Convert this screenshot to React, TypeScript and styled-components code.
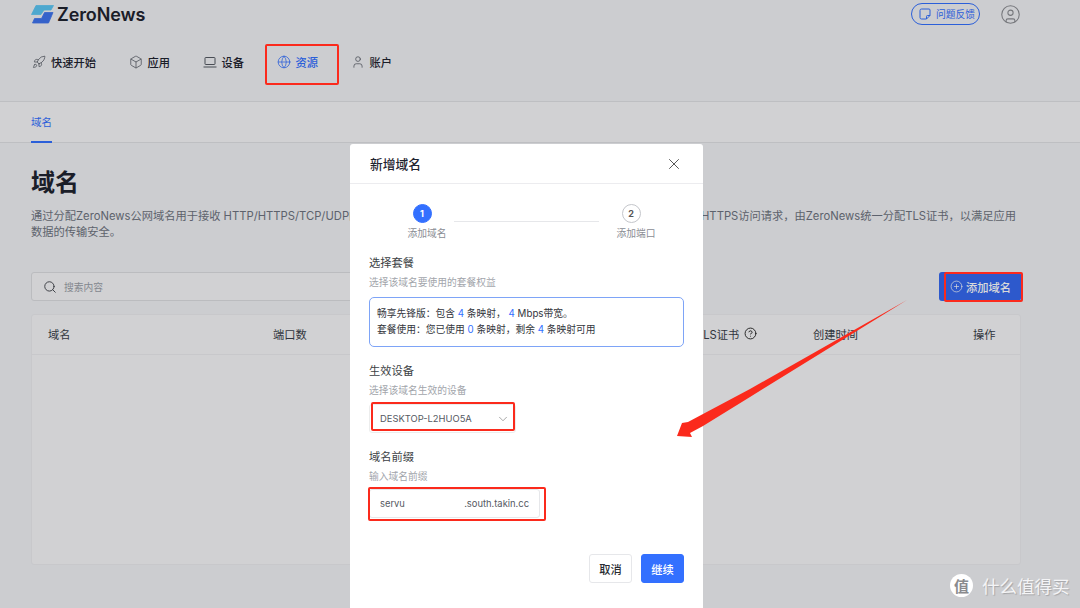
import styled, { createGlobalStyle } from 'styled-components';
import {
	Box,
	ChevronDown,
	CircleHelp,
	CirclePlus,
	CircleUser,
	Globe,
	Rocket,
	Search,
	User,
	X,
} from 'lucide-react';

const Colors = {
	blue: '#3370ff',
	ink: '#1f2430',
	text: '#3a3f4a',
	muted: '#6e7480',
	faint: '#9a9fa8',
	line: '#e4e6ea',
	red: '#fb2a1c',
};

function LaptopIcon({ size = 14 }: { size?: number }) {
	return (
		<svg width={size} height={size} viewBox="0 0 14 14" fill="none" stroke="currentColor" strokeWidth="1">
			<rect x="2" y="2.5" width="10" height="7" rx="0.6" />
			<path d="M0.5 12H13.5" />
		</svg>
	);
}

function NoteIcon() {
	return (
		<svg width="12" height="12" viewBox="0 0 12 12" fill="none" stroke="currentColor" strokeWidth="1">
			<path d="M2.5 1H10A1 1 0 0 1 11 2V7.5L7.5 11H2.5A1.5 1.5 0 0 1 1 9.5V2.5A1.5 1.5 0 0 1 2.5 1Z" />
			<path d="M7.5 11V8.5A1 1 0 0 1 8.5 7.5H11" />
		</svg>
	);
}

const navItems = [
	{ label: '快速开始', icon: Rocket },
	{ label: '应用', icon: Box },
	{ label: '设备', icon: LaptopIcon },
	{ label: '资源', icon: Globe, active: true },
	{ label: '账户', icon: User },
];

function Logo() {
	return (
		<S.Logo>
			<svg width="23" height="19" viewBox="0 0 23 19">
				<path d="M5 0.5H22.5L20 5H13L10 9.5H0.5Z" fill="#5cc6f4" stroke="#5cc6f4" strokeLinejoin="round" strokeWidth="0.8" />
				<path d="M13.5 7.5H22L17.5 18H1.5L3.5 13.5H10.5Z" fill="#3f74ee" stroke="#3f74ee" strokeLinejoin="round" strokeWidth="0.8" />
			</svg>
			<S.LogoText>ZeroNews</S.LogoText>
		</S.Logo>
	);
}

function Stepper() {
	return (
		<S.Stepper>
			<S.Step>
				<S.StepDot $active>1</S.StepDot>
				<S.StepLabel>添加域名</S.StepLabel>
			</S.Step>
			<S.StepLine />
			<S.Step>
				<S.StepDot>2</S.StepDot>
				<S.StepLabel>添加端口</S.StepLabel>
			</S.Step>
		</S.Stepper>
	);
}

function Modal() {
	return (
		<S.Modal>
			<S.ModalHeader>
				<S.ModalTitle>新增域名</S.ModalTitle>
				<X size={18} strokeWidth={1.2} color="#444" />
			</S.ModalHeader>
			<S.ModalBody>
				<Stepper />
				<S.FieldTitle>选择套餐</S.FieldTitle>
				<S.FieldHint>选择该域名要使用的套餐权益</S.FieldHint>
				<S.PlanCard>
					<div>
						畅享先锋版：包含 <S.Num>4</S.Num> 条映射， <S.Num>4</S.Num> Mbps带宽。
					</div>
					<div>
						套餐使用：您已使用 <S.Num>0</S.Num> 条映射，剩余 <S.Num>4</S.Num> 条映射可用
					</div>
				</S.PlanCard>
				<S.FieldTitle $gap={16}>生效设备</S.FieldTitle>
				<S.FieldHint>选择该域名生效的设备</S.FieldHint>
				<S.Select>
					DESKTOP-L2HUO5A
					<ChevronDown size={14} strokeWidth={1.1} color="#777" />
				</S.Select>
				<S.FieldTitle $gap={16}>域名前缀</S.FieldTitle>
				<S.FieldHint>输入域名前缀</S.FieldHint>
				<S.PrefixInput>
					<span>servu</span>
					<span>.south.takin.cc</span>
				</S.PrefixInput>
				<S.ModalFooter>
					<S.CancelButton>取消</S.CancelButton>
					<S.ConfirmButton>继续</S.ConfirmButton>
				</S.ModalFooter>
			</S.ModalBody>
		</S.Modal>
	);
}

export default function App() {
	return (
		<S.Page>
			<S.GlobalStyle />
			<S.Header>
				<S.TopBar>
					<Logo />
					<S.TopActions>
						<S.FeedbackButton>
							<NoteIcon />
							问题反馈
						</S.FeedbackButton>
						<CircleUser size={21} strokeWidth={1.2} color="#8a8c91" />
					</S.TopActions>
				</S.TopBar>
				<S.Nav>
					{navItems.map(({ label, icon: Icon, active }) => (
						<S.NavItem key={label} $active={active}>
							<Icon size={14} strokeWidth={1.3} />
							<span>{label}</span>
						</S.NavItem>
					))}
				</S.Nav>
			</S.Header>
			<S.Tabs>
				<S.Tab>域名</S.Tab>
			</S.Tabs>
			<S.Content>
				<S.Title>域名</S.Title>
				<S.Description>
					通过分配ZeroNews公网域名用于接收 HTTP/HTTPS/TCP/UDP的应用流量，并转发到您设备上的本地服务；对于全部的域名及其端口
					HTTPS访问请求，由ZeroNews统一分配TLS证书，以满足应用
					<br />
					数据的传输安全。
				</S.Description>
				<S.Toolbar>
					<S.SearchBox>
						<Search size={14} strokeWidth={1.6} color="#3f434a" />
						搜索内容
					</S.SearchBox>
					<S.AddButton>
						<CirclePlus size={13} strokeWidth={1.3} />
						添加域名
					</S.AddButton>
				</S.Toolbar>
				<S.Table>
					<S.TableHead>
						<span>域名</span>
						<span>端口数</span>
						<S.HeadWithIcon>
							TLS证书
							<CircleHelp size={13} strokeWidth={1.7} color="#222" />
						</S.HeadWithIcon>
						<span>创建时间</span>
						<span>操作</span>
					</S.TableHead>
				</S.Table>
			</S.Content>
			<S.Backdrop />
			<Modal />
			<S.NavMark />
			<S.SelectMark />
			<S.InputMark />
			<S.AddMark />
			<S.Arrow viewBox="0 0 1080 608">
				<polygon
					points="907,300 750,389 703,414 688,422 682,423 677,436 692,437 690,433 703,426 750,397"
					fill={Colors.red}
				/>
			</S.Arrow>
			<S.Watermark>
				<S.WatermarkBadge>值</S.WatermarkBadge>
				什么值得买
			</S.Watermark>
		</S.Page>
	);
}

namespace S {
	export const GlobalStyle = createGlobalStyle`
		html, body {
			margin: 0;
			padding: 0;
		}
		* {
			box-sizing: border-box;
		}
		body {
			font-family: Inter, 'Noto Sans CJK SC', sans-serif;
			color: ${Colors.text};
		}
	`;

	export const Page = styled.div`
		position: relative;
		width: 1080px;
		height: 608px;
		overflow: hidden;
		background-color: #f0f1f5;
	`;

	export const Header = styled.header`
		height: 102px;
		border-bottom: 1px solid #e0e1e4;
	`;

	export const TopBar = styled.div`
		display: flex;
		align-items: center;
		justify-content: space-between;
		height: 28px;
		padding: 0 59px 0 31px;
	`;

	export const Logo = styled.div`
		display: flex;
		align-items: center;
		gap: 3px;
	`;

	export const LogoText = styled.span`
		font-size: 18px;
		font-weight: 600;
		letter-spacing: -0.1px;
		color: ${Colors.ink};
	`;

	export const TopActions = styled.div`
		display: flex;
		align-items: center;
		gap: 20px;
	`;

	export const FeedbackButton = styled.div`
		display: flex;
		align-items: center;
		gap: 5px;
		width: 69px;
		height: 22px;
		margin-top: -1px;
		padding-left: 7px;
		border: 1px solid ${Colors.blue};
		border-radius: 11px;
		font-size: 9.75px;
		color: ${Colors.blue};
	`;

	export const Nav = styled.nav`
		display: flex;
		align-items: center;
		gap: 32.5px;
		height: 20px;
		margin-top: 24px;
		padding-left: 32px;
	`;

	export const NavItem = styled.div<{ $active?: boolean }>`
		display: flex;
		align-items: center;
		gap: 5px;
		font-size: 11.25px;
		font-weight: 500;
		color: ${({ $active }) => ($active ? Colors.blue : Colors.ink)};

		svg {
			color: ${({ $active }) => ($active ? Colors.blue : '#555a63')};
		}
	`;

	export const Tabs = styled.div`
		display: flex;
		height: 41px;
		padding-left: 31px;
		background-color: #f6f6f8;
		border-bottom: 1px solid #e0e1e4;
	`;

	export const Tab = styled.div`
		display: flex;
		align-items: center;
		height: 41px;
		border-bottom: 2px solid ${Colors.blue};
		font-size: 10.5px;
		color: ${Colors.blue};
	`;

	export const Content = styled.main`
		padding: 25px 59px 0 31px;
	`;

	export const Title = styled.h1`
		margin: 0;
		font-size: 24px;
		line-height: 30px;
		font-weight: 700;
		color: ${Colors.ink};
	`;

	export const Description = styled.p`
		margin: 10px 0 0;
		font-size: 11.25px;
		line-height: 16px;
		white-space: nowrap;
		color: ${Colors.muted};
	`;

	export const Toolbar = styled.div`
		display: flex;
		align-items: center;
		justify-content: space-between;
		height: 29px;
		margin-top: 32px;
	`;

	export const SearchBox = styled.div`
		display: flex;
		align-items: center;
		gap: 7px;
		width: 640px;
		height: 29px;
		padding-left: 11px;
		background-color: #f6f6f8;
		border: 1px solid #dcdde1;
		border-radius: 3px;
		font-size: 9.75px;
		color: ${Colors.faint};
	`;

	export const AddButton = styled.div`
		display: flex;
		align-items: center;
		gap: 3px;
		width: 82px;
		height: 29px;
		padding-left: 11px;
		background-color: #3569f0;
		border-radius: 3px;
		font-size: 11.25px;
		font-weight: 500;
		color: #fff;
	`;

	export const Table = styled.section`
		height: 251px;
		margin-top: 13px;
		background-color: #f6f6f8;
		border: 1px solid #ebecef;
		border-radius: 3px;
	`;

	export const TableHead = styled.div`
		display: grid;
		grid-template-columns: 225px 423px 117px 160px 1fr;
		align-items: center;
		height: 40px;
		padding: 0 0 2px 16px;
		border-bottom: 1px solid #ebecef;
		font-size: 11.25px;
		color: ${Colors.text};
	`;

	export const HeadWithIcon = styled.span`
		display: flex;
		align-items: center;
		gap: 5px;
	`;

	export const Backdrop = styled.div`
		position: absolute;
		inset: 0;
		background-color: rgba(0, 0, 0, 0.15);
	`;

	export const Modal = styled.div`
		position: absolute;
		top: 144px;
		left: 350px;
		width: 353px;
		height: 480px;
		background-color: #fff;
		border-radius: 3px;
	`;

	export const ModalHeader = styled.div`
		display: flex;
		align-items: center;
		justify-content: space-between;
		height: 40px;
		padding: 0 20px;
		border-bottom: 1px solid #ececef;
	`;

	export const ModalTitle = styled.div`
		font-size: 12.75px;
		font-weight: 500;
		color: ${Colors.ink};
	`;

	export const ModalBody = styled.div`
		padding: 20px 19px 0;
	`;

	export const Stepper = styled.div`
		display: flex;
		padding-left: 39px;
		margin-bottom: 14px;
	`;

	export const Step = styled.div`
		display: flex;
		flex-direction: column;
		align-items: center;
		width: 38px;
	`;

	export const StepDot = styled.div<{ $active?: boolean }>`
		display: flex;
		align-items: center;
		justify-content: center;
		width: 19px;
		height: 19px;
		margin-right: 10px;
		border-radius: 50%;
		border: 1px solid ${({ $active }) => ($active ? Colors.blue : '#c4c6cb')};
		background-color: ${({ $active }) => ($active ? Colors.blue : '#fff')};
		font-size: 9px;
		line-height: 11px;
		font-weight: 700;
		color: ${({ $active }) => ($active ? '#fff' : '#555')};
	`;

	export const StepLabel = styled.div`
		margin-top: 3px;
		font-size: 9.75px;
		line-height: 15px;
		white-space: nowrap;
		color: #8a8d94;
	`;

	export const StepLine = styled.div`
		width: 145px;
		height: 1px;
		margin: 17px 18px 0 8px;
		background-color: #e6e7ea;
	`;

	export const FieldTitle = styled.div<{ $gap?: number }>`
		margin-top: ${({ $gap }) => $gap ?? 0}px;
		font-size: 11.25px;
		line-height: 16px;
		color: #3c3f45;
	`;

	export const FieldHint = styled.div`
		margin-top: 5px;
		font-size: 9.75px;
		line-height: 14px;
		color: #a2a5ab;
	`;

	export const PlanCard = styled.div`
		display: flex;
		flex-direction: column;
		justify-content: center;
		height: 50px;
		margin-top: 7px;
		padding-left: 7px;
		border: 1px solid #7ea4f7;
		border-radius: 5px;
		font-size: 9.75px;
		line-height: 16px;
		color: #33363c;
	`;

	export const Num = styled.span`
		color: ${Colors.blue};
	`;

	export const Select = styled.div`
		display: flex;
		align-items: center;
		justify-content: space-between;
		width: 147px;
		height: 29px;
		margin-top: 6px;
		padding: 0 5px 0 10px;
		border: 1px solid #eceded;
		border-radius: 3px;
		font-size: 9.4px;
		color: #555962;
	`;

	export const PrefixInput = styled.div`
		display: flex;
		align-items: center;
		justify-content: space-between;
		width: 171px;
		height: 29px;
		margin-top: 5px;
		padding: 0 10px 0 10px;
		border: 1px solid #e6e7ea;
		border-radius: 3px;
		font-size: 9.4px;
		color: #555962;
	`;

	export const ModalFooter = styled.div`
		display: flex;
		justify-content: flex-end;
		gap: 9px;
		margin-top: 36px;
	`;

	export const CancelButton = styled.div`
		display: flex;
		align-items: center;
		justify-content: center;
		width: 43px;
		height: 29px;
		border: 1px solid #e6e7ea;
		border-radius: 3px;
		font-size: 11.25px;
		font-weight: 500;
		color: #2a2d33;
	`;

	export const ConfirmButton = styled(CancelButton)`
		border-color: ${Colors.blue};
		background-color: ${Colors.blue};
		color: #fff;
	`;

	const Mark = styled.div`
		position: absolute;
		border: 2.5px solid ${Colors.red};
		border-radius: 2px;
	`;

	export const NavMark = styled(Mark)`
		top: 44px;
		left: 265px;
		width: 74px;
		height: 41px;
	`;

	export const SelectMark = styled(Mark)`
		top: 402px;
		left: 371px;
		width: 144px;
		height: 29px;
	`;

	export const InputMark = styled(Mark)`
		top: 487px;
		left: 368px;
		width: 178px;
		height: 34px;
	`;

	export const AddMark = styled(Mark)`
		top: 272px;
		left: 944px;
		width: 79px;
		height: 30px;
	`;

	export const Arrow = styled.svg`
		position: absolute;
		inset: 0;
		width: 1080px;
		height: 608px;
		pointer-events: none;
	`;

	export const Watermark = styled.div`
		position: absolute;
		top: 573px;
		left: 950px;
		display: flex;
		align-items: center;
		gap: 9px;
		height: 24px;
		font-size: 17.5px;
		white-space: nowrap;
		color: #f4f4f6;
		text-shadow: 1px 1px 1px rgba(0, 0, 0, 0.2);
	`;

	export const WatermarkBadge = styled.div`
		display: flex;
		align-items: center;
		justify-content: center;
		width: 23px;
		height: 23px;
		border-radius: 50%;
		background-color: #fff;
		font-size: 15px;
		font-weight: 700;
		color: #8a8b8e;
		text-shadow: none;
	`;
}
